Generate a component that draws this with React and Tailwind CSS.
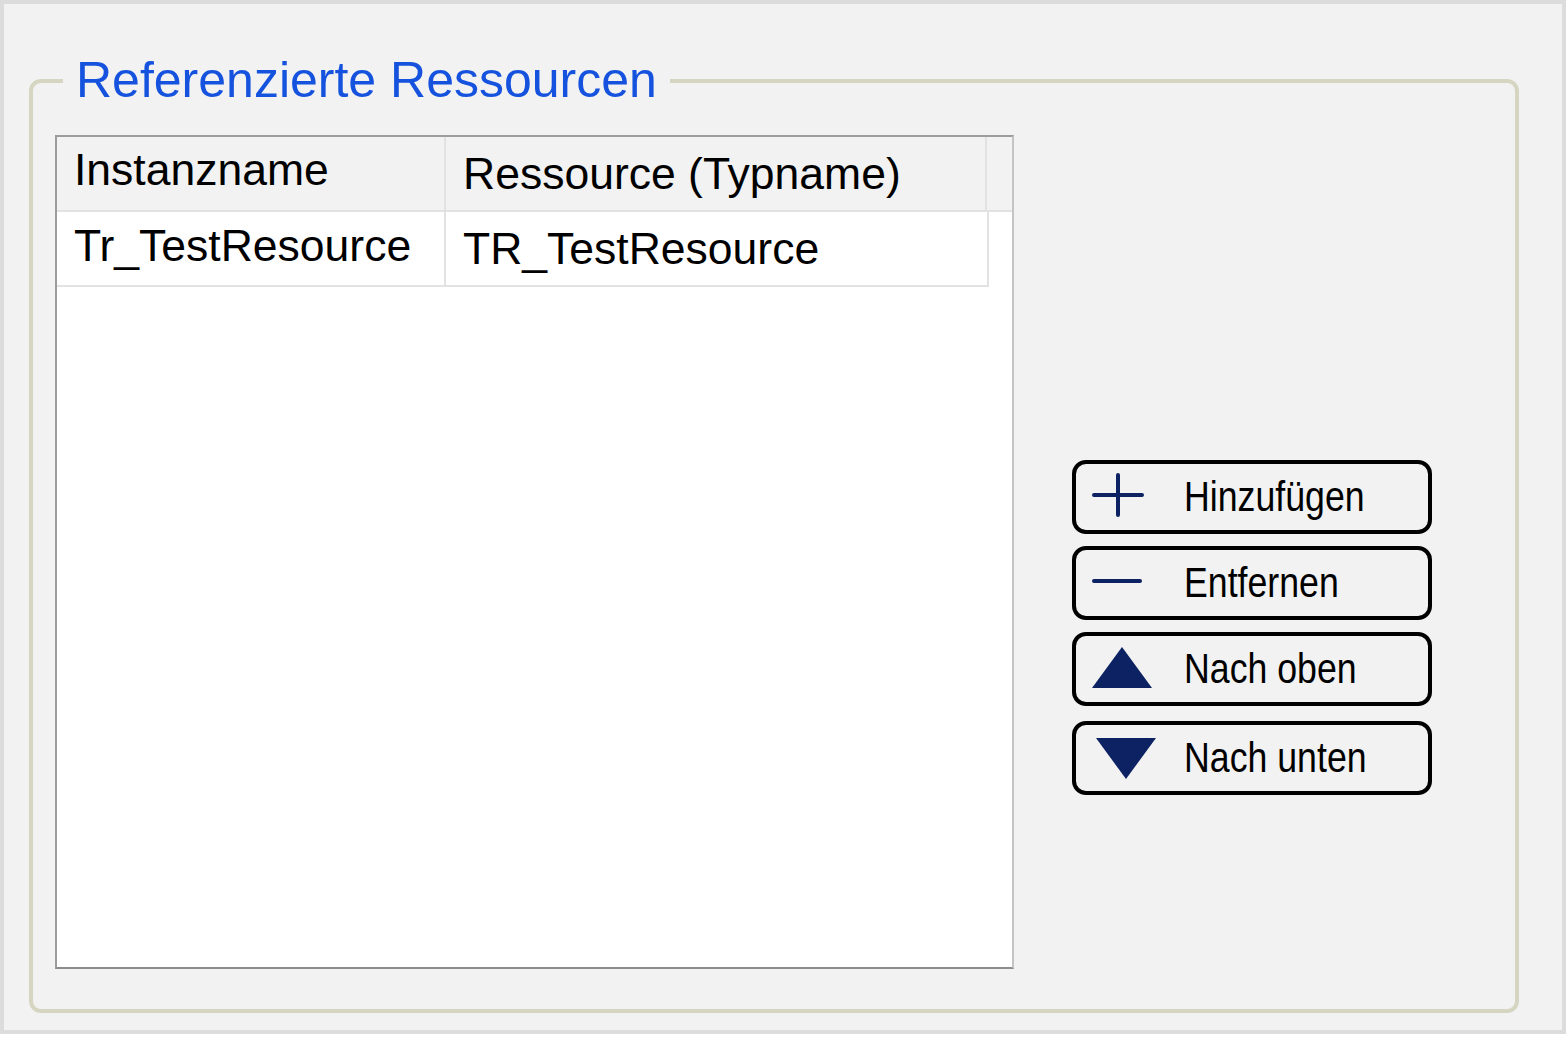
import React from 'react';

const navy = '#0c2263';

const PlusIcon = () => (
    <svg width="70" height="50" viewBox="0 0 70 50" className="shrink-0">
        <path d="M2 23 H50 M26 3 V43" stroke={navy} strokeWidth="4" strokeLinecap="round" fill="none" />
    </svg>
);

const MinusIcon = () => (
    <svg width="70" height="50" viewBox="0 0 70 50" className="shrink-0">
        <path d="M2 23 H48" stroke={navy} strokeWidth="4" strokeLinecap="round" fill="none" />
    </svg>
);

const UpIcon = () => (
    <svg width="70" height="50" viewBox="0 0 70 50" className="shrink-0">
        <polygon points="0,44 60,44 30,3" fill={navy} />
    </svg>
);

const DownIcon = () => (
    <svg width="70" height="50" viewBox="0 0 70 50" className="shrink-0">
        <polygon points="4,5 64,5 34,46" fill={navy} />
    </svg>
);

const ActionButton = ({ icon, label, className = '' }) => (
    <button
        type="button"
        className={`flex items-center w-[360px] h-[74px] pl-[16px] border-4 border-black rounded-[14px] bg-[#f2f2f2] ${className}`}
    >
        {icon}
        <span className="ml-[22px] inline-block origin-left scale-x-[0.85] text-[42px] leading-none text-black whitespace-nowrap">
            {label}
        </span>
    </button>
);

export default function App() {
    return (
        <div className="w-[1566px] h-[1034px] border-4 border-[#dcdcdc] bg-[#f2f2f2] font-['Liberation_Sans',Arial,sans-serif] overflow-hidden">
            <fieldset className="ml-[25px] mt-[48px] w-[1490px] h-[961px] border-4 border-[#d5d5c2] rounded-[12px] pl-[22px]">
                <legend className="ml-[8px] px-[13px] text-[50px] text-[#1552de] leading-[1.149]">
                    Referenzierte Ressourcen
                </legend>

                <div className="flex items-start mt-[26px]">
                    {/* table */}
                    <div className="w-[959px] h-[834px] border-2 border-t-[#9c9c9c] border-l-[#9c9c9c] border-r-[#c4c4c4] border-b-[#8c8c8c] bg-white flex flex-col">
                        <div className="flex h-[75px] bg-[#f2f2f2] border-b-2 border-[#e2e2e2] text-[44.5px] leading-none text-black">
                            <div className="w-[389px] pl-[17px] pt-[11px] border-r-2 border-[#e2e2e2]">Instanzname</div>
                            <div className="w-[541px] pl-[17px] pt-[15px] border-r-2 border-[#e2e2e2]">Ressource (Typname)</div>
                            <div className="flex-1" />
                        </div>
                        <div className="flex h-[75px] w-[932px] border-b-2 border-r-2 border-[#e2e2e2] text-[44.5px] leading-none text-black">
                            <div className="w-[389px] pl-[17px] pt-[12px] border-r-2 border-[#e2e2e2]">Tr_TestResource</div>
                            <div className="flex-1 pl-[17px] pt-[15px]">TR_TestResource</div>
                        </div>
                    </div>

                    {/* buttons */}
                    <div className="flex flex-col ml-[58px] mt-[325px]">
                        <ActionButton icon={<PlusIcon />} label="Hinzufügen" />
                        <ActionButton icon={<MinusIcon />} label="Entfernen" className="mt-[12px]" />
                        <ActionButton icon={<UpIcon />} label="Nach oben" className="mt-[12px]" />
                        <ActionButton icon={<DownIcon />} label="Nach unten" className="mt-[15px]" />
                    </div>
                </div>
            </fieldset>
        </div>
    );
}
